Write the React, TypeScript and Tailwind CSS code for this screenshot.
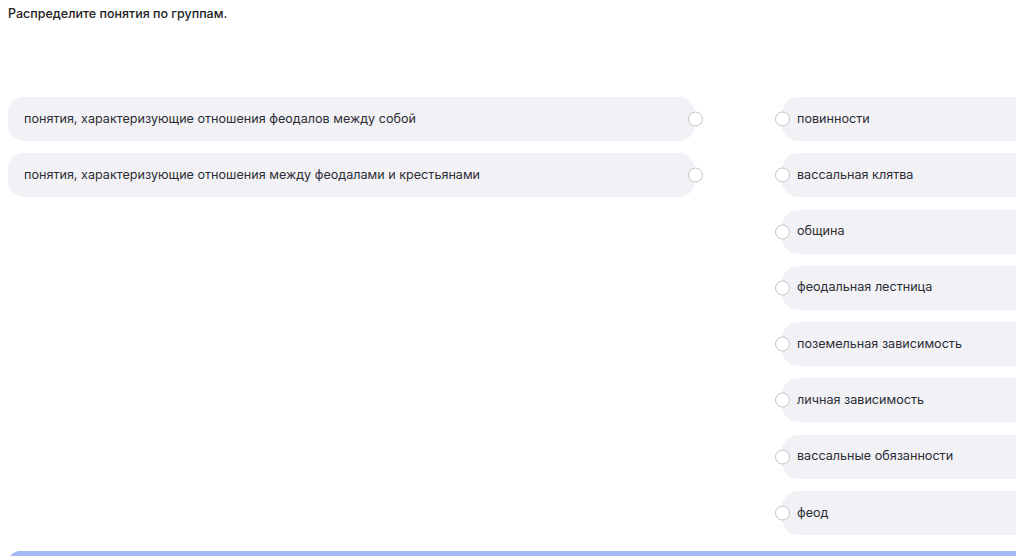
import React from "react";

const left = [
  "понятия, характеризующие отношения феодалов между собой",
  "понятия, характеризующие отношения между феодалами и крестьянами",
];
const right = [
  "повинности",
  "вассальная клятва",
  "община",
  "феодальная лестница",
  "поземельная зависимость",
  "личная зависимость",
  "вассальные обязанности",
  "феод",
];

function Radio() {
  return <span className="block h-[15px] w-[15px] rounded-full border border-[#c4c4c8] bg-white" />;
}

export default function App() {
  return (
    <div
      className="relative h-[556px] w-[1016px] overflow-hidden bg-white text-[#2b2d33]"
      style={{ fontFamily: "Inter, 'Noto Sans', sans-serif" }}
    >
      <div className="px-[8px] pt-[6px]">
        <div className="text-[12.5px] font-medium leading-[16px] text-[#222]">Распределите понятия по группам.</div>
        <div className="mt-[75px] flex">
          <div className="flex w-[687px] shrink-0 flex-col gap-[12px]">
            {left.map((t) => (
              <div key={t} className="relative flex h-[44px] items-center rounded-[16px] bg-[#f2f2f6] pl-[16px] pr-[20px] text-[12.6px]">
                {t}
                <span className="absolute right-[-8px] top-1/2 -translate-y-1/2">
                  <Radio />
                </span>
              </div>
            ))}
          </div>
          <div className="ml-[87px] flex w-[400px] shrink-0 flex-col gap-[12.3px]">
            {right.map((t) => (
              <div key={t} className="relative flex h-[44px] items-center rounded-[16px] bg-[#f2f2f6] pl-[15px] text-[12.6px]">
                <span className="absolute left-[-7px] top-1/2 -translate-y-1/2">
                  <Radio />
                </span>
                {t}
              </div>
            ))}
          </div>
        </div>
      </div>
      <div className="absolute bottom-[-20px] left-[8px] right-0 h-[25px] rounded-tl-[12px] bg-[#a3b8f2]" />
    </div>
  );
}
